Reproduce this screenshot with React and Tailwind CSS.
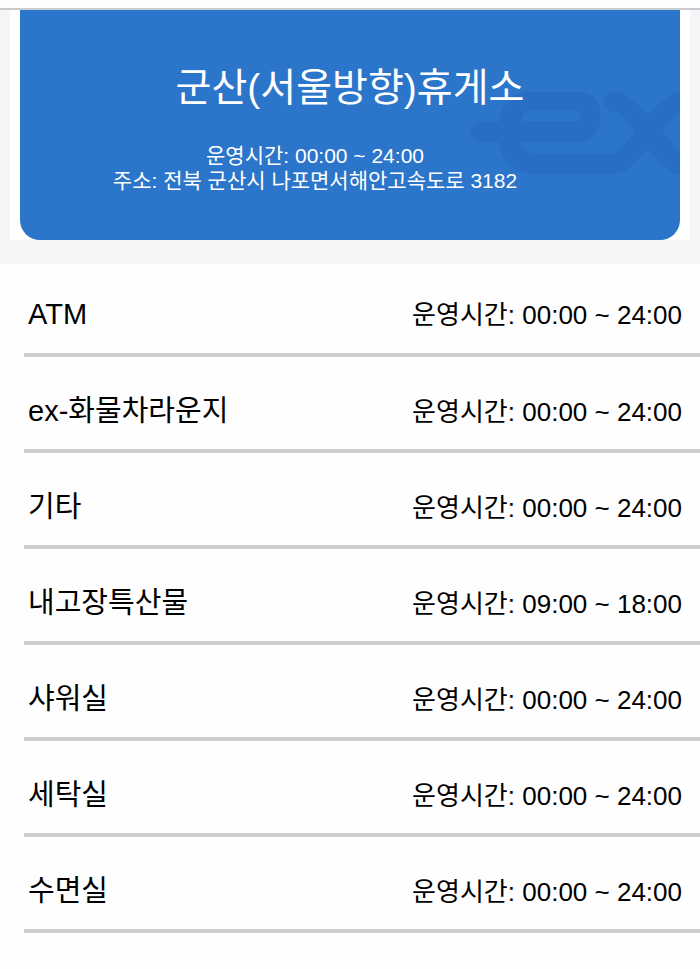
import React from 'react'

const facilities = [
  { name: 'ATM', hours: '00:00 ~ 24:00' },
  { name: 'ex-화물차라운지', hours: '00:00 ~ 24:00' },
  { name: '기타', hours: '00:00 ~ 24:00' },
  { name: '내고장특산물', hours: '09:00 ~ 18:00' },
  { name: '샤워실', hours: '00:00 ~ 24:00' },
  { name: '세탁실', hours: '00:00 ~ 24:00' },
  { name: '수면실', hours: '00:00 ~ 24:00' },
]

function ExMark() {
  return (
    <svg
      className="absolute right-0 top-20 h-[86px] w-[212px]"
      viewBox="0 0 212 86"
      fill="#276ec4"
      aria-hidden="true"
    >
      {/* bar and bowl of the e */}
      <path d="M12 32H31C34 13 44 2 64 2H108C124 2 132 10 132 24V28C132 43 124 52 108 52H54C56 60 61 64 68 64H142C149 64 153 59 158 52L167 41L150 22C140 22 136 18 136 12C136 5 140 2 146 2C154 2 158 5 163 9L180 25L197 9C202 5 206 3 212 2V23L194 41L212 62V84C206 84 200 81 195 76L180 60L166 74C159 81 153 84 142 84H66C46 84 34 72 31 52H12C-1 52 -1 32 12 32ZM54 31H108C115 31 115 20 108 20H64C59 20 54 24 54 28Z" fillRule="evenodd" />
    </svg>
  )
}

export default function App() {
  return (
    <div className="w-full bg-[#fefefe] font-['Liberation_Sans','Noto_Sans_CJK_KR',sans-serif] text-black">
      <div className="h-2"></div>

      <header className="border-t-2 border-[#c9cacd] bg-[#f3f5f7] px-2.5 pb-6">
        <div className="bg-white px-2.5">
          <div className="relative h-[230px] overflow-hidden rounded-b-[20px] bg-[#2b75ca] pt-[53px] text-center text-white">
            <ExMark />
            <h1 className="relative text-[39px] leading-[50px]">군산(서울방향)휴게소</h1>
            <div className="relative mt-[30px] pr-[70px] text-[21px] leading-[25px]">
              <p>운영시간: 00:00 ~ 24:00</p>
              <p>주소: 전북 군산시 나포면서해안고속도로 3182</p>
            </div>
          </div>
        </div>
      </header>

      <ul className="pb-9 pl-6">
        {facilities.map((item) => (
          <li
            key={item.name}
            className="flex h-24 items-baseline justify-between border-b-4 border-[#cfcfcf] pl-1 pr-[18px] pt-9 first:h-[93px] first:pt-8"
          >
            <span className="text-[29px] leading-9">{item.name}</span>
            <span className="text-[26px] leading-9">운영시간: {item.hours}</span>
          </li>
        ))}
      </ul>
    </div>
  )
}
